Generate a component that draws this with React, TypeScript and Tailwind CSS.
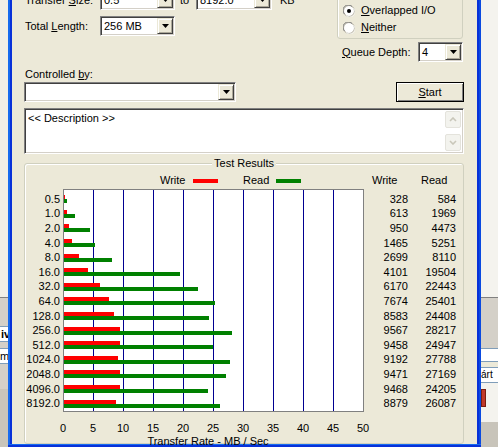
import React from "react";

const rows: [string, number, number][] = [
  ["0.5", 328, 584],
  ["1.0", 613, 1969],
  ["2.0", 950, 4473],
  ["4.0", 1465, 5251],
  ["8.0", 2699, 8110],
  ["16.0", 4101, 19504],
  ["32.0", 6170, 22443],
  ["64.0", 7674, 25401],
  ["128.0", 8583, 24408],
  ["256.0", 9567, 28217],
  ["512.0", 9458, 24947],
  ["1024.0", 9192, 27788],
  ["2048.0", 9471, 27169],
  ["4096.0", 9468, 24205],
  ["8192.0", 8879, 26087],
];

const ticks = [0, 5, 10, 15, 20, 25, 30, 35, 40, 45, 50];

const sunken =
  "border border-t-[#808080] border-l-[#808080] border-b-white border-r-white shadow-[inset_1px_1px_0_#404040,inset_-1px_-1px_0_#d4d0c8]";

function DropArrow() {
  return (
    <div className="w-[16px] h-[16px] shrink-0 flex items-center justify-center bg-[#ece9d8] border border-t-[#ece9d8] border-l-[#ece9d8] border-b-[#404040] border-r-[#404040] shadow-[inset_1px_1px_0_white,inset_-1px_-1px_0_#aca899]">
      <svg width="7" height="4" viewBox="0 0 7 4">
        <path d="M0 0h7L3.5 4z" fill="#000" />
      </svg>
    </div>
  );
}

function Combo({ value, className }: { value: string; className: string }) {
  return (
    <div className={`h-[20px] flex items-center bg-white p-[1px] ${sunken} ${className}`}>
      <span className="flex-1 pl-[2px] truncate">{value}</span>
      <DropArrow />
    </div>
  );
}

function Radio({ checked }: { checked?: boolean }) {
  return (
    <svg width="12" height="12" viewBox="0 0 12 12" className="shrink-0">
      <circle cx="6" cy="6" r="5.5" fill="#fff" stroke="#aca899" />
      <path d="M1.5 9A5 5 0 0 1 9 1.5" stroke="#808080" fill="none" />
      <path d="M10.5 3A5 5 0 0 1 3 10.5" stroke="#f4f3ee" fill="none" />
      {checked && <circle cx="6" cy="6" r="2" fill="#000" />}
    </svg>
  );
}

function ScrollBtn({ up }: { up?: boolean }) {
  return (
    <div className="h-[17px] flex items-center justify-center rounded-[2px] bg-[#f3f3ee] border border-[#e4e3dc]">
      <svg width="8" height="5" viewBox="0 0 8 5">
        <path d={up ? "M1 4l3-3 3 3" : "M1 1l3 3 3-3"} stroke="#c9c7ba" strokeWidth="1.6" fill="none" />
      </svg>
    </div>
  );
}

export default function App() {
  return (
    <div className="w-[498px] h-[447px] overflow-hidden flex text-[11px] leading-[13px] text-black font-['Liberation_Sans',Arial,sans-serif] bg-[#ece9d8]">
      {/* background window, left */}
      <div className="w-[8px] flex flex-col bg-[#f1efe6]">
        <div className="h-[297px]" />
        <div className="h-[1px] bg-[#808080]" />
        <div className="h-[28px] bg-[#d4d0c8]" />
        <div className="h-[16px] bg-white border-y border-[#7f9db9] font-bold overflow-hidden pl-[1px] leading-[14px]">iv</div>
        <div className="h-[6px] bg-[#d4d0c8]" />
        <div className="h-[16px] bg-white border-y border-[#7f9db9] overflow-hidden leading-[14px]">m</div>
        <div className="h-[25px] bg-[#d4d0c8]" />
        <div className="flex-1 bg-[#c8c4ba]" />
      </div>

      {/* dialog window */}
      <div className="w-[473px] flex flex-col">
        <div className="flex-1 flex">
          <div className="w-[4px] bg-[#0831d9] border-l-2 border-[#166aee]" />

          <div className="w-[465px] flex flex-col pl-[12px] pr-[13px] bg-[#ece9d8]">
            {/* top controls */}
            <div className="flex h-[102px]">
              <div className="w-[313px] flex flex-col">
                <div className="mt-[-10px] h-[20px] flex items-center">
                  <span className="w-[76px] pl-[1px]">
                    Transfer <u>S</u>ize:
                  </span>
                  <Combo value="0.5" className="w-[75px]" />
                  <span className="ml-[5px] w-[16px]">to</span>
                  <Combo value="8192.0" className="w-[76px]" />
                  <span className="ml-[8px]">KB</span>
                </div>
                <div className="mt-[6px] h-[20px] flex items-center">
                  <span className="w-[76px] pl-[1px]">
                    Total <u>L</u>ength:
                  </span>
                  <Combo value="256 MB" className="w-[75px]" />
                </div>
                <div className="mt-[32px] h-[13px] pl-[1px]">
                  Controlled <u>b</u>y:
                </div>
                <Combo value="" className="mt-[1px] w-[212px]" />
              </div>

              <div className="w-[127px] flex flex-col">
                <div className="mt-[-20px] h-[59px] w-[126px] border border-[#d0d0bf] rounded-[3px] shadow-[inset_1px_1px_0_white] pt-[21px] pl-[5px]">
                  <div className="h-[17px] flex items-center gap-[6px]">
                    <Radio checked />
                    <span>
                      <u>O</u>verlapped I/O
                    </span>
                  </div>
                  <div className="h-[17px] flex items-center gap-[6px]">
                    <Radio />
                    <span>
                      <u>N</u>either
                    </span>
                  </div>
                </div>
                <div className="mt-[3px] h-[20px] flex items-center">
                  <span className="w-[81px] pl-[5px]">
                    <u>Q</u>ueue Depth:
                  </span>
                  <Combo value="4" className="w-[45px]" />
                </div>
                <button className="mt-[20px] ml-[59px] w-[68px] h-[20px] bg-[#ece9d8] border border-black shadow-[inset_1px_1px_0_white,inset_-1px_-1px_0_#808080] flex items-center justify-center">
                  <span>
                    <u>S</u>tart
                  </span>
                </button>
              </div>
            </div>

            {/* description */}
            <div className={`mt-[6px] h-[46px] w-[440px] bg-white flex p-[2px] ${sunken}`}>
              <div className="flex-1 pl-[1px] pt-[1px]">&lt;&lt; Description &gt;&gt;</div>
              <div className="w-[16px] flex flex-col justify-between">
                <ScrollBtn up />
                <ScrollBtn />
              </div>
            </div>

            {/* test results */}
            <div className="relative mt-[9px] h-[281px] w-[440px] border border-[#d0d0bf] rounded-[3px] shadow-[inset_1px_1px_0_white]">
              <span className="absolute -top-[7px] left-1/2 -translate-x-1/2 px-[2px] bg-[#ece9d8]">Test Results</span>

              <div className="mt-[10px] h-[13px] flex items-center">
                <span className="ml-[135px] w-[33px]">Write</span>
                <div className="w-[25px] h-[4px] bg-[#ff0000]" />
                <span className="ml-[25px] w-[33px]">Read</span>
                <div className="w-[25px] h-[4px] bg-[#008000]" />
                <span className="ml-[71px] w-[49px]">Write</span>
                <span>Read</span>
              </div>

              <div className="mt-[2px] flex">
                <div className="w-[38px] h-[223px] pt-[3px] pb-[1px] pr-[3px] flex flex-col">
                  {rows.map(([size]) => (
                    <div key={size} className="flex-1 flex items-center justify-end">
                      {size}
                    </div>
                  ))}
                </div>

                <div className="relative w-[301px] h-[223px] bg-white border border-[#808080]">
                  <div className="absolute inset-0 flex">
                    {ticks.slice(1, 10).map((t) => (
                      <div key={t} className="w-[30px] border-r border-[#000090]" />
                    ))}
                  </div>
                  <div className="relative h-full pt-[2px] flex flex-col">
                    {rows.map(([size, w, r]) => (
                      <div key={size} className="flex-1 flex flex-col justify-center">
                        <div className="h-[4px] bg-[#ff0000]" style={{ width: Math.max(0, w * 0.006 - 1) }} />
                        <div className="h-[4px] bg-[#008000]" style={{ width: Math.max(0, r * 0.006 - 1) }} />
                      </div>
                    ))}
                  </div>
                </div>

                <div className="w-[44px] h-[223px] pt-[3px] pb-[1px] flex flex-col">
                  {rows.map(([size, w]) => (
                    <div key={size} className="flex-1 flex items-center justify-end">
                      {w}
                    </div>
                  ))}
                </div>
                <div className="w-[48px] h-[223px] pt-[3px] pb-[1px] flex flex-col">
                  {rows.map(([size, , r]) => (
                    <div key={size} className="flex-1 flex items-center justify-end">
                      {r}
                    </div>
                  ))}
                </div>
              </div>

              <div className="mt-[10px] ml-[23px] h-[13px] flex">
                {ticks.map((t) => (
                  <span key={t} className="w-[30px] text-center">
                    {t}
                  </span>
                ))}
              </div>
              <div className="h-[13px] w-[366px] text-center">Transfer Rate - MB / Sec</div>
            </div>
          </div>

          <div className="w-[4px] bg-[#0831d9] border-r-2 border-[#0a4ae0]" />
        </div>
        <div className="h-[3px] bg-[#0831d9] border-t border-[#166aee]" />
      </div>

      {/* background window, right */}
      <div className="w-[17px] flex flex-col bg-[#f4f3ee]">
        <div className="h-[297px]" />
        <div className="h-[1px] bg-[#808080]" />
        <div className="h-[50px] bg-[#d4d0c8]" />
        <div className="h-[14px] bg-white border-y border-[#7f9db9]" />
        <div className="h-[5px] bg-[#ece9d8]" />
        <div className="h-[16px] bg-white border-y border-[#7f9db9] overflow-hidden whitespace-nowrap leading-[14px] text-[10px]">árt</div>
        <div className="h-[6px]" />
        <div className="h-[18px] w-[5px] bg-[#c0392b] border border-[#7a1f10]" />
        <div className="h-[15px] bg-[#f4f3ee]" />
        <div className="flex-1 bg-[#c8c4ba]" />
      </div>
    </div>
  );
}
